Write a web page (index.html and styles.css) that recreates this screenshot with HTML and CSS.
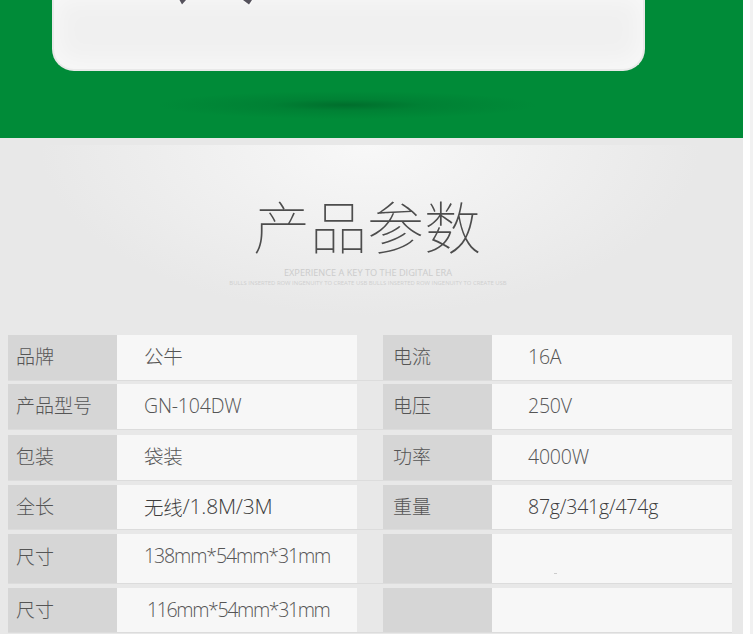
FILE: index.html
```html
<!DOCTYPE html>
<html lang="zh">
<head>
<meta charset="utf-8">
<title>产品参数</title>
<link rel="stylesheet" href="styles.css">
</head>
<body>
<div class="page">
  <main class="content">
    <section class="hero">
      <div class="panel">
        <svg class="marks" width="100" height="8" viewBox="0 0 100 8">
          <polygon points="0,0 9,0 4,6.5" fill="#f8f8f8"/>
          <polygon points="1.5,0 8,0 4,4.5" fill="#55525c"/>
          <polygon points="63,0 75,0 72,6.5" fill="#f8f8f8"/>
          <polygon points="65,0 74,0 71,4.5" fill="#55525c"/>
        </svg>
      </div>
      <div class="floor-shadow"></div>
    </section>
    <section class="params">
      <div class="params-inner">
        <header class="heading">
          <h1 class="title">产品参数</h1>
          <p class="sub-one">EXPERIENCE A KEY TO THE DIGITAL ERA</p>
          <p class="sub-two">BULLS INSERTED ROW INGENUITY TO CREATE USB BULLS INSERTED ROW INGENUITY TO CREATE USB</p>
        </header>
        <div class="table">
          <div class="row r1">
            <div class="label">品牌</div><div class="value cjk">公牛</div>
            <div class="label second">电流</div><div class="value v-right">16A</div>
          </div>
          <div class="row r2">
            <div class="label">产品型号</div><div class="value">GN-104DW</div>
            <div class="label second">电压</div><div class="value v-right">250V</div>
          </div>
          <div class="row r3">
            <div class="label">包装</div><div class="value cjk">袋装</div>
            <div class="label second">功率</div><div class="value v-right">4000W</div>
          </div>
          <div class="row r4">
            <div class="label">全长</div><div class="value dark wide"><span class="cjk-run">无线</span>/1.8M/3M</div>
            <div class="label second">重量</div><div class="value v-right dark">87g/341g/474g</div>
          </div>
          <div class="row r5">
            <div class="label">尺寸</div><div class="value dims">138mm*54mm*31mm</div>
            <div class="label second"></div><div class="value v-right"><span class="speck"></span></div>
          </div>
          <div class="row r6">
            <div class="label">尺寸</div><div class="value dims shift">116mm*54mm*31mm</div>
            <div class="label second"></div><div class="value v-right"></div>
          </div>
        </div>
      </div>
    </section>
  </main>
  <div class="gutter"></div>
</div>
</body>
</html>
```
FILE: styles.css
```css
* { box-sizing: border-box; }
html, body {
  margin: 0;
  height: 634px;
  overflow: hidden;
  background: #fff;
}
.page {
  display: flex;
  width: 753px;
  height: 634px;
  font-family: "Open Sans", "Noto Sans CJK SC", sans-serif;
}
.content {
  width: 743px;
  flex: none;
  overflow: hidden;
}
.gutter {
  width: 3px;
  margin-left: 7px;
  background: #f1f1f1;
}
.hero {
  height: 138px;
  background: #008b38;
  padding-left: 52px;
}
.panel {
  position: relative;
  width: 593px;
  height: 71px;
  background: #f0f0f0;
  border: 2px solid #e9e9e9;
  border-top: 0;
  border-radius: 0 0 22px 22px;
  box-shadow: inset 0 -4px 22px 4px #f8f8f8;
}
.marks {
  position: absolute;
  left: 124px;
  top: 0;
}
.floor-shadow {
  width: 380px;
  height: 28px;
  margin: 20px 0 0 105px;
  background: radial-gradient(ellipse 50% 50% at 50% 50%, rgba(0, 100, 40, .75) 0%, rgba(0, 110, 45, .35) 40%, rgba(0, 139, 56, 0) 100%);
}
.params {
  height: 496px;
  padding-top: 7px;
  background: #e8e8e8;
}
.params-inner {
  height: 489px;
  padding: 0 11px 0 8px;
  background: radial-gradient(ellipse 330px 170px at 370px 0, #f8f8f8 0%, #e8e8e8 100%);
}
.heading {
  height: 190px;
  padding-top: 40px;
  text-align: center;
}
.title {
  margin: 0 0 0 -6px;
  font-family: "Noto Sans CJK SC", sans-serif;
  font-size: 57px;
  font-weight: 100;
  line-height: 78px;
  color: #4d4d4d;
}
.sub-one {
  margin: 3px 0 0 -4px;
  font-size: 9.2px;
  line-height: 13px;
  color: #cbcbcb;
}
.sub-two {
  margin: 0 0 0 -4px;
  font-size: 5.9px;
  line-height: 9px;
  color: #cfcfcf;
  white-space: nowrap;
}
.table {
  display: flex;
  flex-direction: column;
}
.row {
  display: flex;
  border-bottom: 1px solid #dcdcdc;
  font-size: 19px;
  color: #555;
}
.r1 { height: 46px; margin-bottom: 3px; }
.r2 { height: 46px; margin-bottom: 5px; }
.r3 { height: 46px; margin-bottom: 4px; }
.r4 { height: 45px; margin-bottom: 4px; }
.r5 { height: 50px; margin-bottom: 4px; }
.r6 { height: 45px; }
.label {
  width: 109px;
  padding: 0 0 4px 8px;
  display: flex;
  align-items: center;
  background: #d6d6d6;
  font-family: "Noto Sans CJK SC", sans-serif;
  font-weight: 300;
}
.second {
  margin-left: 26px;
  padding-left: 10px;
}
.r3 .label { padding-bottom: 5px; }
.r5 .label { padding-bottom: 6px; }
.value {
  width: 240px;
  padding: 0 0 2px 27px;
  display: flex;
  align-items: center;
  background: #f7f7f7;
  font-weight: 300;
  font-size: 19.5px;
  letter-spacing: -.2px;
  position: relative;
}
.v-right { padding-left: 36px; }
.dark { color: #3d3d3d; }
.row .cjk { padding-bottom: 5px; }
.wide { font-size: 21px; }
.cjk-run { font-size: 19.5px; }
.dims { letter-spacing: -1.1px; }
.row .shift { padding-left: 30px; letter-spacing: -1.35px; }
.r5 .value { padding-bottom: 7px; }
.speck {
  position: absolute;
  left: 62px;
  top: 39px;
  width: 3px;
  height: 1px;
  background: #ccc;
}
```
